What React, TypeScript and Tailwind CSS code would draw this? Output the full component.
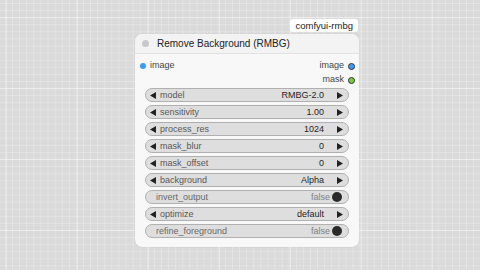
import React from "react";

type W = { kind: "combo" | "toggle"; label: string; value: string };

const widgets: W[] = [
  { kind: "combo", label: "model", value: "RMBG-2.0" },
  { kind: "combo", label: "sensitivity", value: "1.00" },
  { kind: "combo", label: "process_res", value: "1024" },
  { kind: "combo", label: "mask_blur", value: "0" },
  { kind: "combo", label: "mask_offset", value: "0" },
  { kind: "combo", label: "background", value: "Alpha" },
  { kind: "toggle", label: "invert_output", value: "false" },
  { kind: "combo", label: "optimize", value: "default" },
  { kind: "toggle", label: "refine_foreground", value: "false" },
];

function Left() {
  return (
    <svg width="6" height="7" viewBox="0 0 6 7" className="shrink-0">
      <path d="M6 0 L0 3.5 L6 7 Z" fill="#222" />
    </svg>
  );
}
function Right() {
  return (
    <svg width="6" height="7" viewBox="0 0 6 7" className="shrink-0">
      <path d="M0 0 L6 3.5 L0 7 Z" fill="#222" />
    </svg>
  );
}

function Widget({ w }: { w: W }) {
  if (w.kind === "toggle") {
    return (
      <div className="flex h-[14px] items-center rounded-full border border-[#b0b0b0] bg-[#dedede] pl-[10px] pr-[6px] text-[9px] leading-none">
        <span className="text-[#6a6a6a]">{w.label}</span>
        <span className="ml-auto text-[#808080]">{w.value}</span>
        <span className="ml-[2px] h-[10px] w-[10px] rounded-full bg-[#2a2a2a]" />
      </div>
    );
  }
  return (
    <div className="flex h-[14px] items-center rounded-full border border-[#b0b0b0] bg-[#dedede] pl-[4px] pr-[5px] text-[9px] leading-none">
      <Left />
      <span className="ml-[4px] text-[#585858]">{w.label}</span>
      <span className="ml-auto text-[#1e1e1e]">{w.value}</span>
      <span className="ml-[13px]">
        <Right />
      </span>
    </div>
  );
}

export default function App() {
  return (
    <div
      className="h-[270px] w-[480px] overflow-hidden bg-[#dadada] bg-[image:linear-gradient(to_right,rgba(255,255,255,0.35)_1px,transparent_1px),linear-gradient(to_bottom,rgba(255,255,255,0.35)_1px,transparent_1px),linear-gradient(to_right,rgba(255,255,255,0.25)_1px,transparent_1px),linear-gradient(to_bottom,rgba(255,255,255,0.25)_1px,transparent_1px)] bg-[size:71px_71px,71px_71px,7.1px_7.1px,7.1px_7.1px] bg-[position:6px_17px,6px_17px,5px_3px,5px_3px] pt-[19px] pl-[135px]"
      style={{ fontFamily: '"Liberation Sans", Arial, sans-serif' }}
    >
      <div className="flex w-[224px] flex-col">
        <div className="mr-[1px] flex h-[13px] items-center self-end rounded-[3px] bg-white px-[5px] text-[9.5px] leading-none text-[#222]">
          comfyui-rmbg
        </div>
        <div className="mt-[2px] rounded-[7px] bg-[#f8f8f8] shadow-[0_0_1px_rgba(0,0,0,0.2)]">
          <div className="flex h-[20px] items-center rounded-t-[7px] border-b border-[#e2e2e2] bg-[#f3f3f3] pl-[7px]">
            <span className="h-[7px] w-[7px] rounded-full bg-[#c8c8c8]" />
            <span className="ml-[8px] text-[10px] text-[#222]">Remove Background (RMBG)</span>
          </div>
          <div className="flex items-start px-[4px] pt-[5px]">
            <div className="flex h-[14px] items-center">
              <span className="ml-[1px] h-[6px] w-[6px] rounded-full bg-[#3b9cf0]" />
              <span className="ml-[4px] text-[9px] text-[#444]">image</span>
            </div>
            <div className="ml-auto flex flex-col items-end">
              <div className="flex h-[14px] items-center">
                <span className="text-[9px] text-[#444]">image</span>
                <span className="ml-[4px] h-[7px] w-[7px] rounded-full border border-[#333] bg-[#3b9cf0]" />
              </div>
              <div className="flex h-[14px] items-center">
                <span className="text-[9px] text-[#444]">mask</span>
                <span className="ml-[4px] h-[7px] w-[7px] rounded-full border border-[#333] bg-[#7ac943]" />
              </div>
            </div>
          </div>
          <div className="flex flex-col gap-[3px] px-[10px] pb-[9px] pt-[1px]">
            {widgets.map((w) => (
              <Widget key={w.label} w={w} />
            ))}
          </div>
        </div>
      </div>
    </div>
  );
}
